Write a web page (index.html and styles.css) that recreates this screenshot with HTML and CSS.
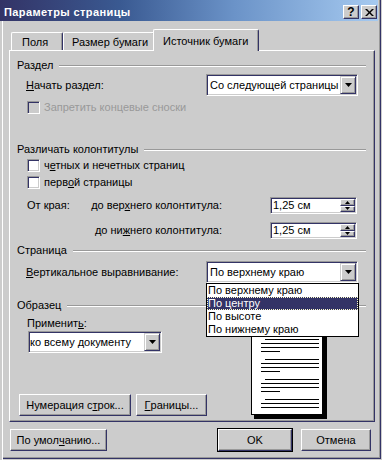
FILE: index.html
```html
<!DOCTYPE html>
<html lang="ru">
<head>
    <meta charset="UTF-8">
    <meta name="viewport" content="width=device-width, initial-scale=1.0">
    <title>Параметры страницы</title>
    <link rel="stylesheet" href="styles.css">
</head>
<body>
<div class="dialog">
    <div class="titlebar">
        <span class="title">Параметры страницы</span>
        <span class="cap-btn raised help">?</span>
        <span class="cap-btn raised close">
            <svg width="9" height="7" viewBox="0 0 9 7"><path d="M0 0h2l2.5 2.5L7 0h2L5.5 3.5 9 7H7L4.5 4.5 2 7H0l3.5-3.5z"/></svg>
        </span>
    </div>

    <div class="tabs">
        <div class="tab tab-margins">Поля</div>
        <div class="tab tab-size">Размер бумаги</div>
        <div class="tab tab-source active">Источник бумаги</div>
    </div>

    <div class="panel">
        <div class="group-title"><span>Раздел</span><i class="etch"></i></div>
        <div class="field-row field-start">
            <span><u>Н</u>ачать раздел:</span>
            <div class="combo combo-wide">
                <span class="combo-text">Со следующей страницы</span>
                <span class="combo-btn raised"><svg width="7" height="4" viewBox="0 0 7 4"><path d="M0 0h7L3.5 4z"/></svg></span>
            </div>
        </div>
        <div class="check-row disabled check-endnotes">
            <span class="box"></span>
            <span>Запретить концевые сноски</span>
        </div>

        <div class="group-title title-headers"><span>Различать колонтитулы</span><i class="etch"></i></div>
        <div class="check-row check-odd">
            <span class="box"></span>
            <span>ч<u>е</u>тных и нечетных страниц</span>
        </div>
        <div class="check-row check-first">
            <span class="box"></span>
            <span>перв<u>о</u>й страницы</span>
        </div>

        <div class="spin-row spin-top">
            <span class="edge-label">От края:</span>
            <span class="spin-label">до вер<u>х</u>него колонтитула:</span>
            <div class="spin">
                <span class="spin-text">1,25 см</span>
                <span class="spin-btns">
                    <span class="spin-btn raised"><svg width="5" height="3" viewBox="0 0 5 3"><path d="M2.5 0L5 3H0z"/></svg></span>
                    <span class="spin-btn raised"><svg width="5" height="3" viewBox="0 0 5 3"><path d="M0 0h5L2.5 3z"/></svg></span>
                </span>
            </div>
        </div>
        <div class="spin-row spin-bottom">
            <span class="edge-label"></span>
            <span class="spin-label">до ни<u>ж</u>него колонтитула:</span>
            <div class="spin">
                <span class="spin-text">1,25 см</span>
                <span class="spin-btns">
                    <span class="spin-btn raised"><svg width="5" height="3" viewBox="0 0 5 3"><path d="M2.5 0L5 3H0z"/></svg></span>
                    <span class="spin-btn raised"><svg width="5" height="3" viewBox="0 0 5 3"><path d="M0 0h5L2.5 3z"/></svg></span>
                </span>
            </div>
        </div>

        <div class="group-title title-page"><span>Страница</span><i class="etch"></i></div>
        <div class="field-row field-align">
            <span><u>В</u>ертикальное выравнивание:</span>
            <div class="combo combo-wide">
                <span class="combo-text">По верхнему краю</span>
                <span class="combo-btn raised"><svg width="7" height="4" viewBox="0 0 7 4"><path d="M0 0h7L3.5 4z"/></svg></span>
            </div>
        </div>

        <div class="group-title title-sample"><span>Образец</span><i class="etch"></i></div>
        <div class="sample">
            <div class="sample-left">
                <div class="apply-label">Применит<u>ь</u>:</div>
                <div class="combo combo-apply">
                    <span class="combo-text">ко всему документу</span>
                    <span class="combo-btn raised"><svg width="7" height="4" viewBox="0 0 7 4"><path d="M0 0h7L3.5 4z"/></svg></span>
                </div>
                <div class="panel-buttons">
                    <span class="btn raised btn-lines">Нумерация с<u>т</u>рок...</span>
                    <span class="btn raised btn-borders"><u>Г</u>раницы...</span>
                </div>
            </div>
            <svg class="preview" width="76" height="106" viewBox="0 0 76 106" shape-rendering="crispEdges">
                <rect x="3" y="3" width="73" height="103" fill="#000"/>
                <rect x="0.5" y="0.5" width="71" height="101" fill="#fff" stroke="#000"/>
                <path stroke="#000" d="M14 6.5h54M10 10.5h58M10 14.5h58M10 18.5h19
                    M14 26.5h54M10 30.5h58M10 34.5h58M10 38.5h19
                    M14 46.5h54M10 50.5h58M10 54.5h58M10 58.5h19
                    M14 66.5h54M10 70.5h58M10 74.5h58M10 78.5h19
                    M14 86.5h54M10 90.5h58M10 94.5h58"/>
            </svg>
        </div>

        <ul class="dropdown">
            <li>По верхнему краю</li>
            <li class="selected">По центру</li>
            <li>По высоте</li>
            <li>По нижнему краю</li>
        </ul>
    </div>

    <div class="footer">
        <span class="btn raised btn-defaults">По умол<u>ч</u>анию...</span>
        <span class="btn raised btn-ok">OK</span>
        <span class="btn raised btn-cancel">Отмена</span>
    </div>
</div>
</body>
</html>
```

FILE: styles.css
```css
* {
    box-sizing: border-box;
}
body {
    margin: 0;
    background: #cccccc;
    font-family: "Liberation Sans", Arial, sans-serif;
    font-size: 11px;
    line-height: 13px;
    color: #000;
}
u {
    text-decoration: underline;
    text-underline-offset: 1px;
}
.dialog {
    width: 382px;
    height: 460px;
    background: #cccccc;
    box-shadow: inset 2px 0 #cccccc, inset 3px 0 #fff,
        inset -1px -1px #cccccc, inset -2px -2px #333366, inset -3px -3px #999;
}

/* raised 3d edge used by all buttons */
.raised {
    background: #cccccc;
    border: 1px solid;
    border-color: #fff #333366 #333366 #fff;
    box-shadow: inset -1px -1px #999;
}

.titlebar {
    display: flex;
    align-items: center;
    height: 21px;
    margin-right: 4px;
    padding: 3px 1px 0 4px;
    background: linear-gradient(90deg, #333366 0%, #3a5a92 32%, #6b93c8 62%, #a6caf0 100%);
}
.title {
    flex: 1;
    color: #fff;
    font-weight: bold;
    letter-spacing: 0.4px;
}
.cap-btn {
    display: flex;
    align-items: center;
    justify-content: center;
    width: 16px;
    height: 14px;
    font-weight: bold;
    font-size: 12px;
}
.close {
    margin-left: 2px;
}

.tabs {
    position: relative;
    z-index: 1;
    display: flex;
    align-items: flex-end;
    height: 21px;
    margin-top: 8px;
    padding-left: 11px;
}
.tab {
    height: 18px;
    padding-top: 3px;
    background: #cccccc;
    border-top: 1px solid #fff;
    border-left: 1px solid #fff;
    border-right: 1px solid #333366;
    border-radius: 2px 2px 0 0;
    box-shadow: inset -1px 0 #999;
    white-space: nowrap;
}
.tab-margins {
    width: 52px;
    padding-left: 10px;
}
.tab-size {
    width: 92px;
    padding-left: 8px;
}
.tab-source {
    width: 106px;
    padding-left: 9px;
}
.tab.active {
    position: relative;
    height: 22px;
    margin-left: -2px;
    margin-bottom: -1px;
    padding-top: 5px;
}

.panel {
    position: relative;
    width: 366px;
    height: 372px;
    margin-left: 9px;
    padding: 8px 8px 0 7px;
    border: 1px solid;
    border-color: #fff #333366 #333366 #fff;
    box-shadow: inset -1px -1px #999;
}
.group-title {
    display: flex;
    align-items: center;
    gap: 6px;
    height: 13px;
}
.etch {
    flex: 1;
    height: 2px;
    border-top: 1px solid #999;
    border-bottom: 1px solid #fff;
}
.title-headers {
    margin-top: 29px;
}
.title-page {
    margin-top: 5px;
}
.title-sample {
    margin-top: 16px;
}

.field-row {
    display: flex;
    align-items: center;
    justify-content: space-between;
    height: 22px;
    padding: 0 8px 0 9px;
}
.field-start {
    margin-top: 2px;
}
.field-align {
    margin-top: 4px;
}

/* sunken box for combos, spinners, checkboxes */
.combo, .spin, .box {
    background: #fff;
    border: 1px solid;
    border-color: #999 #fff #fff #999;
    box-shadow: inset 1px 1px #333366, inset -1px -1px #cccccc;
}
.combo {
    display: flex;
    height: 22px;
    padding: 1px;
}
.combo-wide {
    width: 152px;
}
.combo-text {
    flex: 1;
    padding-left: 2px;
    line-height: 18px;
    white-space: nowrap;
    overflow: hidden;
}
.combo-btn {
    display: flex;
    align-items: center;
    justify-content: center;
    width: 16px;
    border-color: #cccccc #333366 #333366 #cccccc;
    box-shadow: inset 1px 1px #fff, inset -1px -1px #999;
}

.check-row {
    display: flex;
    align-items: center;
    gap: 4px;
    height: 13px;
    padding-left: 10px;
}
.box {
    width: 13px;
    height: 13px;
}
.check-row.disabled {
    color: #999;
}
.check-row.disabled .box {
    background: #cccccc;
}
.check-endnotes {
    margin-top: 5px;
}
.check-odd {
    margin-top: 3px;
}
.check-first {
    margin-top: 4px;
}

.spin-row {
    display: flex;
    align-items: center;
    height: 17px;
    margin-top: 8px;
    padding-left: 10px;
}
.edge-label {
    width: 56px;
}
.spin-label {
    width: 139px;
    text-align: right;
}
.spin {
    display: flex;
    width: 87px;
    height: 17px;
    margin-left: 48px;
    padding: 1px;
}
.spin-text {
    flex: 1;
    padding-left: 1px;
}
.spin-btns {
    display: flex;
    flex-direction: column;
    width: 15px;
}
.spin-btn {
    display: flex;
    align-items: center;
    justify-content: center;
    flex: 1;
}

.sample {
    display: flex;
}
.sample-left {
    flex: 1;
}
.apply-label {
    height: 13px;
    margin-top: 5px;
    padding-left: 10px;
}
.combo-apply {
    width: 134px;
    margin: 1px 0 0 11px;
}
.combo-apply .combo-text {
    padding-left: 0;
}
.panel-buttons {
    display: flex;
    gap: 5px;
    margin-top: 41px;
    padding-left: 2px;
}
.preview {
    display: block;
    margin: 1px 39px 0 0;
}

.btn {
    display: flex;
    align-items: center;
    justify-content: center;
    height: 22px;
    white-space: nowrap;
}
.btn-lines {
    width: 112px;
}
.btn-borders {
    width: 71px;
}

.dropdown {
    position: absolute;
    left: 196px;
    top: 232px;
    width: 153px;
    margin: 0;
    padding: 0;
    list-style: none;
    background: #fff;
    border: 1px solid #000;
}
.dropdown li {
    height: 13px;
    padding-left: 1px;
    white-space: nowrap;
}
.dropdown li.selected {
    background: #333366;
    color: #fff;
    outline: 1px dotted #ffffcc;
    outline-offset: -1px;
}

.footer {
    display: flex;
    margin-top: 7px;
    padding: 0 11px 0 10px;
}
.btn-defaults {
    width: 97px;
}
.btn-ok {
    width: 74px;
    margin-left: auto;
    outline: 1px solid #000;
}
.btn-cancel {
    width: 70px;
    margin-left: 9px;
}
```
